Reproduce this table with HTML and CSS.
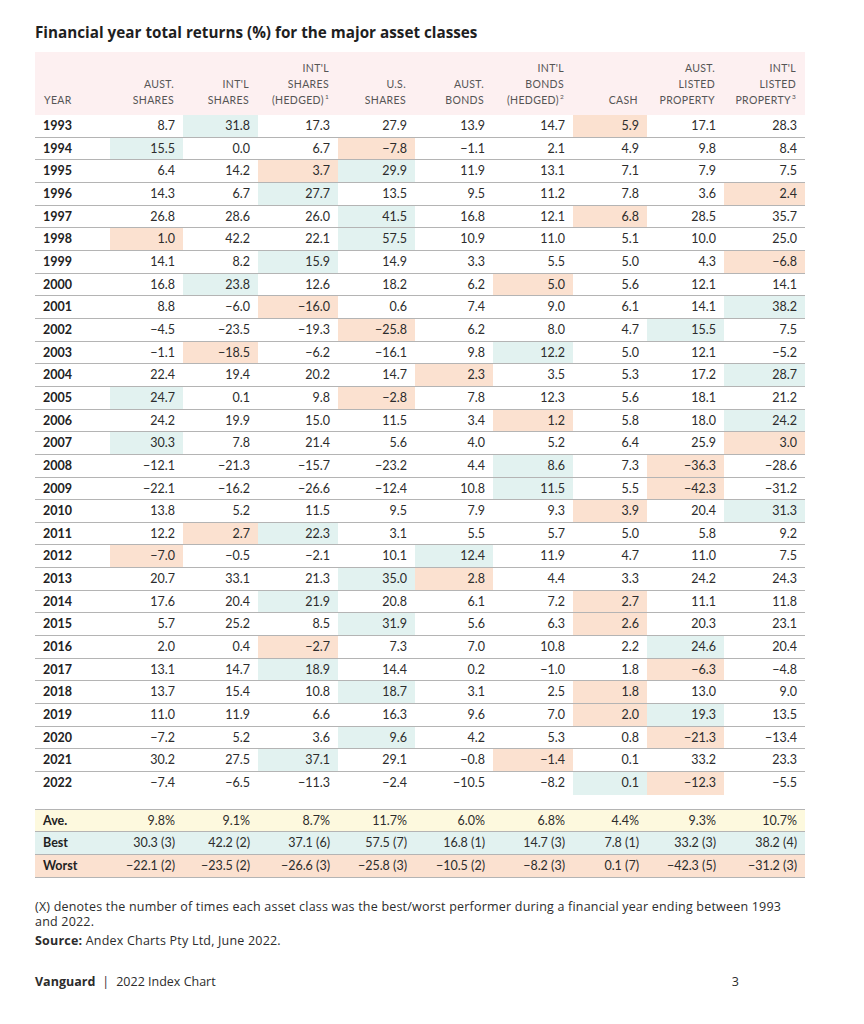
FILE: index.html
```html
<!DOCTYPE html>
<html lang="en">
<head>
<meta charset="utf-8">
<title>Financial year total returns</title>
<link rel="stylesheet" href="styles.css">
</head>
<body>
<div class="page">
  <h1 class="title">Financial year total returns (%) for the major asset classes</h1>

  <div class="table">
    <div class="row head">
      <div class="hc year">YEAR</div>
      <div class="hc">AUST.<br>SHARES</div>
      <div class="hc">INT'L<br>SHARES</div>
      <div class="hc">INT'L<br>SHARES<br>(HEDGED)<sup>1</sup></div>
      <div class="hc">U.S.<br>SHARES</div>
      <div class="hc">AUST.<br>BONDS</div>
      <div class="hc">INT'L<br>BONDS<br>(HEDGED)<sup>2</sup></div>
      <div class="hc">CASH</div>
      <div class="hc">AUST.<br>LISTED<br>PROPERTY</div>
      <div class="hc">INT'L<br>LISTED<br>PROPERTY<sup>3</sup></div>
    </div>

    <div class="row"><div class="y">1993</div><div>8.7</div><div class="b">31.8</div><div>17.3</div><div>27.9</div><div>13.9</div><div>14.7</div><div class="w">5.9</div><div>17.1</div><div>28.3</div></div>
    <div class="row"><div class="y">1994</div><div class="b">15.5</div><div>0.0</div><div>6.7</div><div class="w">−7.8</div><div>−1.1</div><div>2.1</div><div>4.9</div><div>9.8</div><div>8.4</div></div>
    <div class="row"><div class="y">1995</div><div>6.4</div><div>14.2</div><div class="w">3.7</div><div class="b">29.9</div><div>11.9</div><div>13.1</div><div>7.1</div><div>7.9</div><div>7.5</div></div>
    <div class="row"><div class="y">1996</div><div>14.3</div><div>6.7</div><div class="b">27.7</div><div>13.5</div><div>9.5</div><div>11.2</div><div>7.8</div><div>3.6</div><div class="w">2.4</div></div>
    <div class="row"><div class="y">1997</div><div>26.8</div><div>28.6</div><div>26.0</div><div class="b">41.5</div><div>16.8</div><div>12.1</div><div class="w">6.8</div><div>28.5</div><div>35.7</div></div>
    <div class="row"><div class="y">1998</div><div class="w">1.0</div><div>42.2</div><div>22.1</div><div class="b">57.5</div><div>10.9</div><div>11.0</div><div>5.1</div><div>10.0</div><div>25.0</div></div>
    <div class="row"><div class="y">1999</div><div>14.1</div><div>8.2</div><div class="b">15.9</div><div>14.9</div><div>3.3</div><div>5.5</div><div>5.0</div><div>4.3</div><div class="w">−6.8</div></div>
    <div class="row"><div class="y">2000</div><div>16.8</div><div class="b">23.8</div><div>12.6</div><div>18.2</div><div>6.2</div><div class="w">5.0</div><div>5.6</div><div>12.1</div><div>14.1</div></div>
    <div class="row"><div class="y">2001</div><div>8.8</div><div>−6.0</div><div class="w">−16.0</div><div>0.6</div><div>7.4</div><div>9.0</div><div>6.1</div><div>14.1</div><div class="b">38.2</div></div>
    <div class="row"><div class="y">2002</div><div>−4.5</div><div>−23.5</div><div>−19.3</div><div class="w">−25.8</div><div>6.2</div><div>8.0</div><div>4.7</div><div class="b">15.5</div><div>7.5</div></div>
    <div class="row"><div class="y">2003</div><div>−1.1</div><div class="w">−18.5</div><div>−6.2</div><div>−16.1</div><div>9.8</div><div class="b">12.2</div><div>5.0</div><div>12.1</div><div>−5.2</div></div>
    <div class="row"><div class="y">2004</div><div>22.4</div><div>19.4</div><div>20.2</div><div>14.7</div><div class="w">2.3</div><div>3.5</div><div>5.3</div><div>17.2</div><div class="b">28.7</div></div>
    <div class="row"><div class="y">2005</div><div class="b">24.7</div><div>0.1</div><div>9.8</div><div class="w">−2.8</div><div>7.8</div><div>12.3</div><div>5.6</div><div>18.1</div><div>21.2</div></div>
    <div class="row"><div class="y">2006</div><div>24.2</div><div>19.9</div><div>15.0</div><div>11.5</div><div>3.4</div><div class="w">1.2</div><div>5.8</div><div>18.0</div><div class="b">24.2</div></div>
    <div class="row"><div class="y">2007</div><div class="b">30.3</div><div>7.8</div><div>21.4</div><div>5.6</div><div>4.0</div><div>5.2</div><div>6.4</div><div>25.9</div><div class="w">3.0</div></div>
    <div class="row"><div class="y">2008</div><div>−12.1</div><div>−21.3</div><div>−15.7</div><div>−23.2</div><div>4.4</div><div class="b">8.6</div><div>7.3</div><div class="w">−36.3</div><div>−28.6</div></div>
    <div class="row"><div class="y">2009</div><div>−22.1</div><div>−16.2</div><div>−26.6</div><div>−12.4</div><div>10.8</div><div class="b">11.5</div><div>5.5</div><div class="w">−42.3</div><div>−31.2</div></div>
    <div class="row"><div class="y">2010</div><div>13.8</div><div>5.2</div><div>11.5</div><div>9.5</div><div>7.9</div><div>9.3</div><div class="w">3.9</div><div>20.4</div><div class="b">31.3</div></div>
    <div class="row"><div class="y">2011</div><div>12.2</div><div class="w">2.7</div><div class="b">22.3</div><div>3.1</div><div>5.5</div><div>5.7</div><div>5.0</div><div>5.8</div><div>9.2</div></div>
    <div class="row"><div class="y">2012</div><div class="w">−7.0</div><div>−0.5</div><div>−2.1</div><div>10.1</div><div class="b">12.4</div><div>11.9</div><div>4.7</div><div>11.0</div><div>7.5</div></div>
    <div class="row"><div class="y">2013</div><div>20.7</div><div>33.1</div><div>21.3</div><div class="b">35.0</div><div class="w">2.8</div><div>4.4</div><div>3.3</div><div>24.2</div><div>24.3</div></div>
    <div class="row"><div class="y">2014</div><div>17.6</div><div>20.4</div><div class="b">21.9</div><div>20.8</div><div>6.1</div><div>7.2</div><div class="w">2.7</div><div>11.1</div><div>11.8</div></div>
    <div class="row"><div class="y">2015</div><div>5.7</div><div>25.2</div><div>8.5</div><div class="b">31.9</div><div>5.6</div><div>6.3</div><div class="w">2.6</div><div>20.3</div><div>23.1</div></div>
    <div class="row"><div class="y">2016</div><div>2.0</div><div>0.4</div><div class="w">−2.7</div><div>7.3</div><div>7.0</div><div>10.8</div><div>2.2</div><div class="b">24.6</div><div>20.4</div></div>
    <div class="row"><div class="y">2017</div><div>13.1</div><div>14.7</div><div class="b">18.9</div><div>14.4</div><div>0.2</div><div>−1.0</div><div>1.8</div><div class="w">−6.3</div><div>−4.8</div></div>
    <div class="row"><div class="y">2018</div><div>13.7</div><div>15.4</div><div>10.8</div><div class="b">18.7</div><div>3.1</div><div>2.5</div><div class="w">1.8</div><div>13.0</div><div>9.0</div></div>
    <div class="row"><div class="y">2019</div><div>11.0</div><div>11.9</div><div>6.6</div><div>16.3</div><div>9.6</div><div>7.0</div><div class="w">2.0</div><div class="b">19.3</div><div>13.5</div></div>
    <div class="row"><div class="y">2020</div><div>−7.2</div><div>5.2</div><div>3.6</div><div class="b">9.6</div><div>4.2</div><div>5.3</div><div>0.8</div><div class="w">−21.3</div><div>−13.4</div></div>
    <div class="row"><div class="y">2021</div><div>30.2</div><div>27.5</div><div class="b">37.1</div><div>29.1</div><div>−0.8</div><div class="w">−1.4</div><div>0.1</div><div>33.2</div><div>23.3</div></div>
    <div class="row last"><div class="y">2022</div><div>−7.4</div><div>−6.5</div><div>−11.3</div><div>−2.4</div><div>−10.5</div><div>−8.2</div><div class="b">0.1</div><div class="w">−12.3</div><div>−5.5</div></div>

    <div class="summary">
      <div class="row ave"><div class="y">Ave.</div><div>9.8%</div><div>9.1%</div><div>8.7%</div><div>11.7%</div><div>6.0%</div><div>6.8%</div><div>4.4%</div><div>9.3%</div><div>10.7%</div></div>
      <div class="row best"><div class="y">Best</div><div>30.3 (3)</div><div>42.2 (2)</div><div>37.1 (6)</div><div>57.5 (7)</div><div>16.8 (1)</div><div>14.7 (3)</div><div>7.8 (1)</div><div>33.2 (3)</div><div>38.2 (4)</div></div>
      <div class="row worst"><div class="y">Worst</div><div>−22.1 (2)</div><div>−23.5 (2)</div><div>−26.6 (3)</div><div>−25.8 (3)</div><div>−10.5 (2)</div><div>−8.2 (3)</div><div>0.1 (7)</div><div>−42.3 (5)</div><div>−31.2 (3)</div></div>
    </div>
  </div>

  <div class="notes">
    <p>(X) denotes the number of times each asset class was the best/worst performer during a financial year ending between 1993 and 2022.</p>
    <p class="source"><strong>Source:</strong> Andex Charts Pty Ltd, June 2022.</p>
  </div>

  <div class="footer">
    <div><strong>Vanguard</strong><span class="sep">|</span>2022 Index Chart</div>
    <div>3</div>
  </div>
</div>
</body>
</html>
```

FILE: styles.css
```css
html, body {
  margin: 0;
  padding: 0;
  background: #ffffff;
}

body {
  font-family: Lato, "Liberation Sans", Arial, sans-serif;
  color: #2c2c2c;
}

.page {
  padding: 22px 0 0 35px;
}

.title {
  margin: 0 0 10px 0;
  font-family: "Open Sans", Lato, sans-serif;
  font-size: 15.25px;
  line-height: 20px;
  font-weight: 700;
  letter-spacing: 0;
  color: #1f1f1f;
}

.table {
  width: 770px;
}

.row {
  display: grid;
  grid-template-columns: 75px 73px 75px 80px 77px 78px 80px 74px 77px 81px;
  height: 22.67px;
  box-sizing: border-box;
  border-bottom: 1px solid #b4b4b4;
  font-size: 12.5px;
  line-height: 21.67px;
}

.row > div {
  text-align: right;
  padding-right: 8px;
  white-space: nowrap;
}

.row > .y {
  text-align: left;
  padding-left: 8px;
  font-weight: 700;
  color: #222;
}

.row > .b {
  background: #e2f2f0;
}

.row > .w {
  background: #fbe1d0;
}

.row.head {
  height: 63px;
  background: #fdf0f1;
  border-bottom: none;
  align-items: end;
}

.row.head > .hc {
  font-size: 10.5px;
  line-height: 16px;
  letter-spacing: 0.35px;
  color: #555555;
  padding-right: 9px;
  padding-bottom: 7px;
}

.row.head > .hc.year {
  text-align: left;
  padding-left: 9px;
}

.hc sup {
  font-size: 6.5px;
  line-height: 0;
  vertical-align: 5px;
  margin-left: 1px;
}

.row.last {
  border-bottom: none;
}

.summary {
  margin-top: 14px;
  border-top: 1px solid #b4b4b4;
}

.row.ave {
  background: #fdf9de;
}

.row.best {
  background: #e2f2f0;
}

.row.worst {
  background: #fbe1d0;
}

.notes {
  margin-top: 21px;
  font-family: "Open Sans", Lato, sans-serif;
  font-size: 12.5px;
  letter-spacing: 0.2px;
  line-height: 15px;
  color: #2c2c2c;
  width: 760px;
}

.notes p {
  margin: 0;
}

.notes .source {
  margin-top: 4px;
}

.footer {
  margin-top: 26px;
  width: 704px;
  display: flex;
  justify-content: space-between;
  font-family: "Open Sans", Lato, sans-serif;
  font-size: 12.5px;
  line-height: 16px;
  color: #2c2c2c;
}

.footer .sep {
  margin: 0 7px;
}
```
